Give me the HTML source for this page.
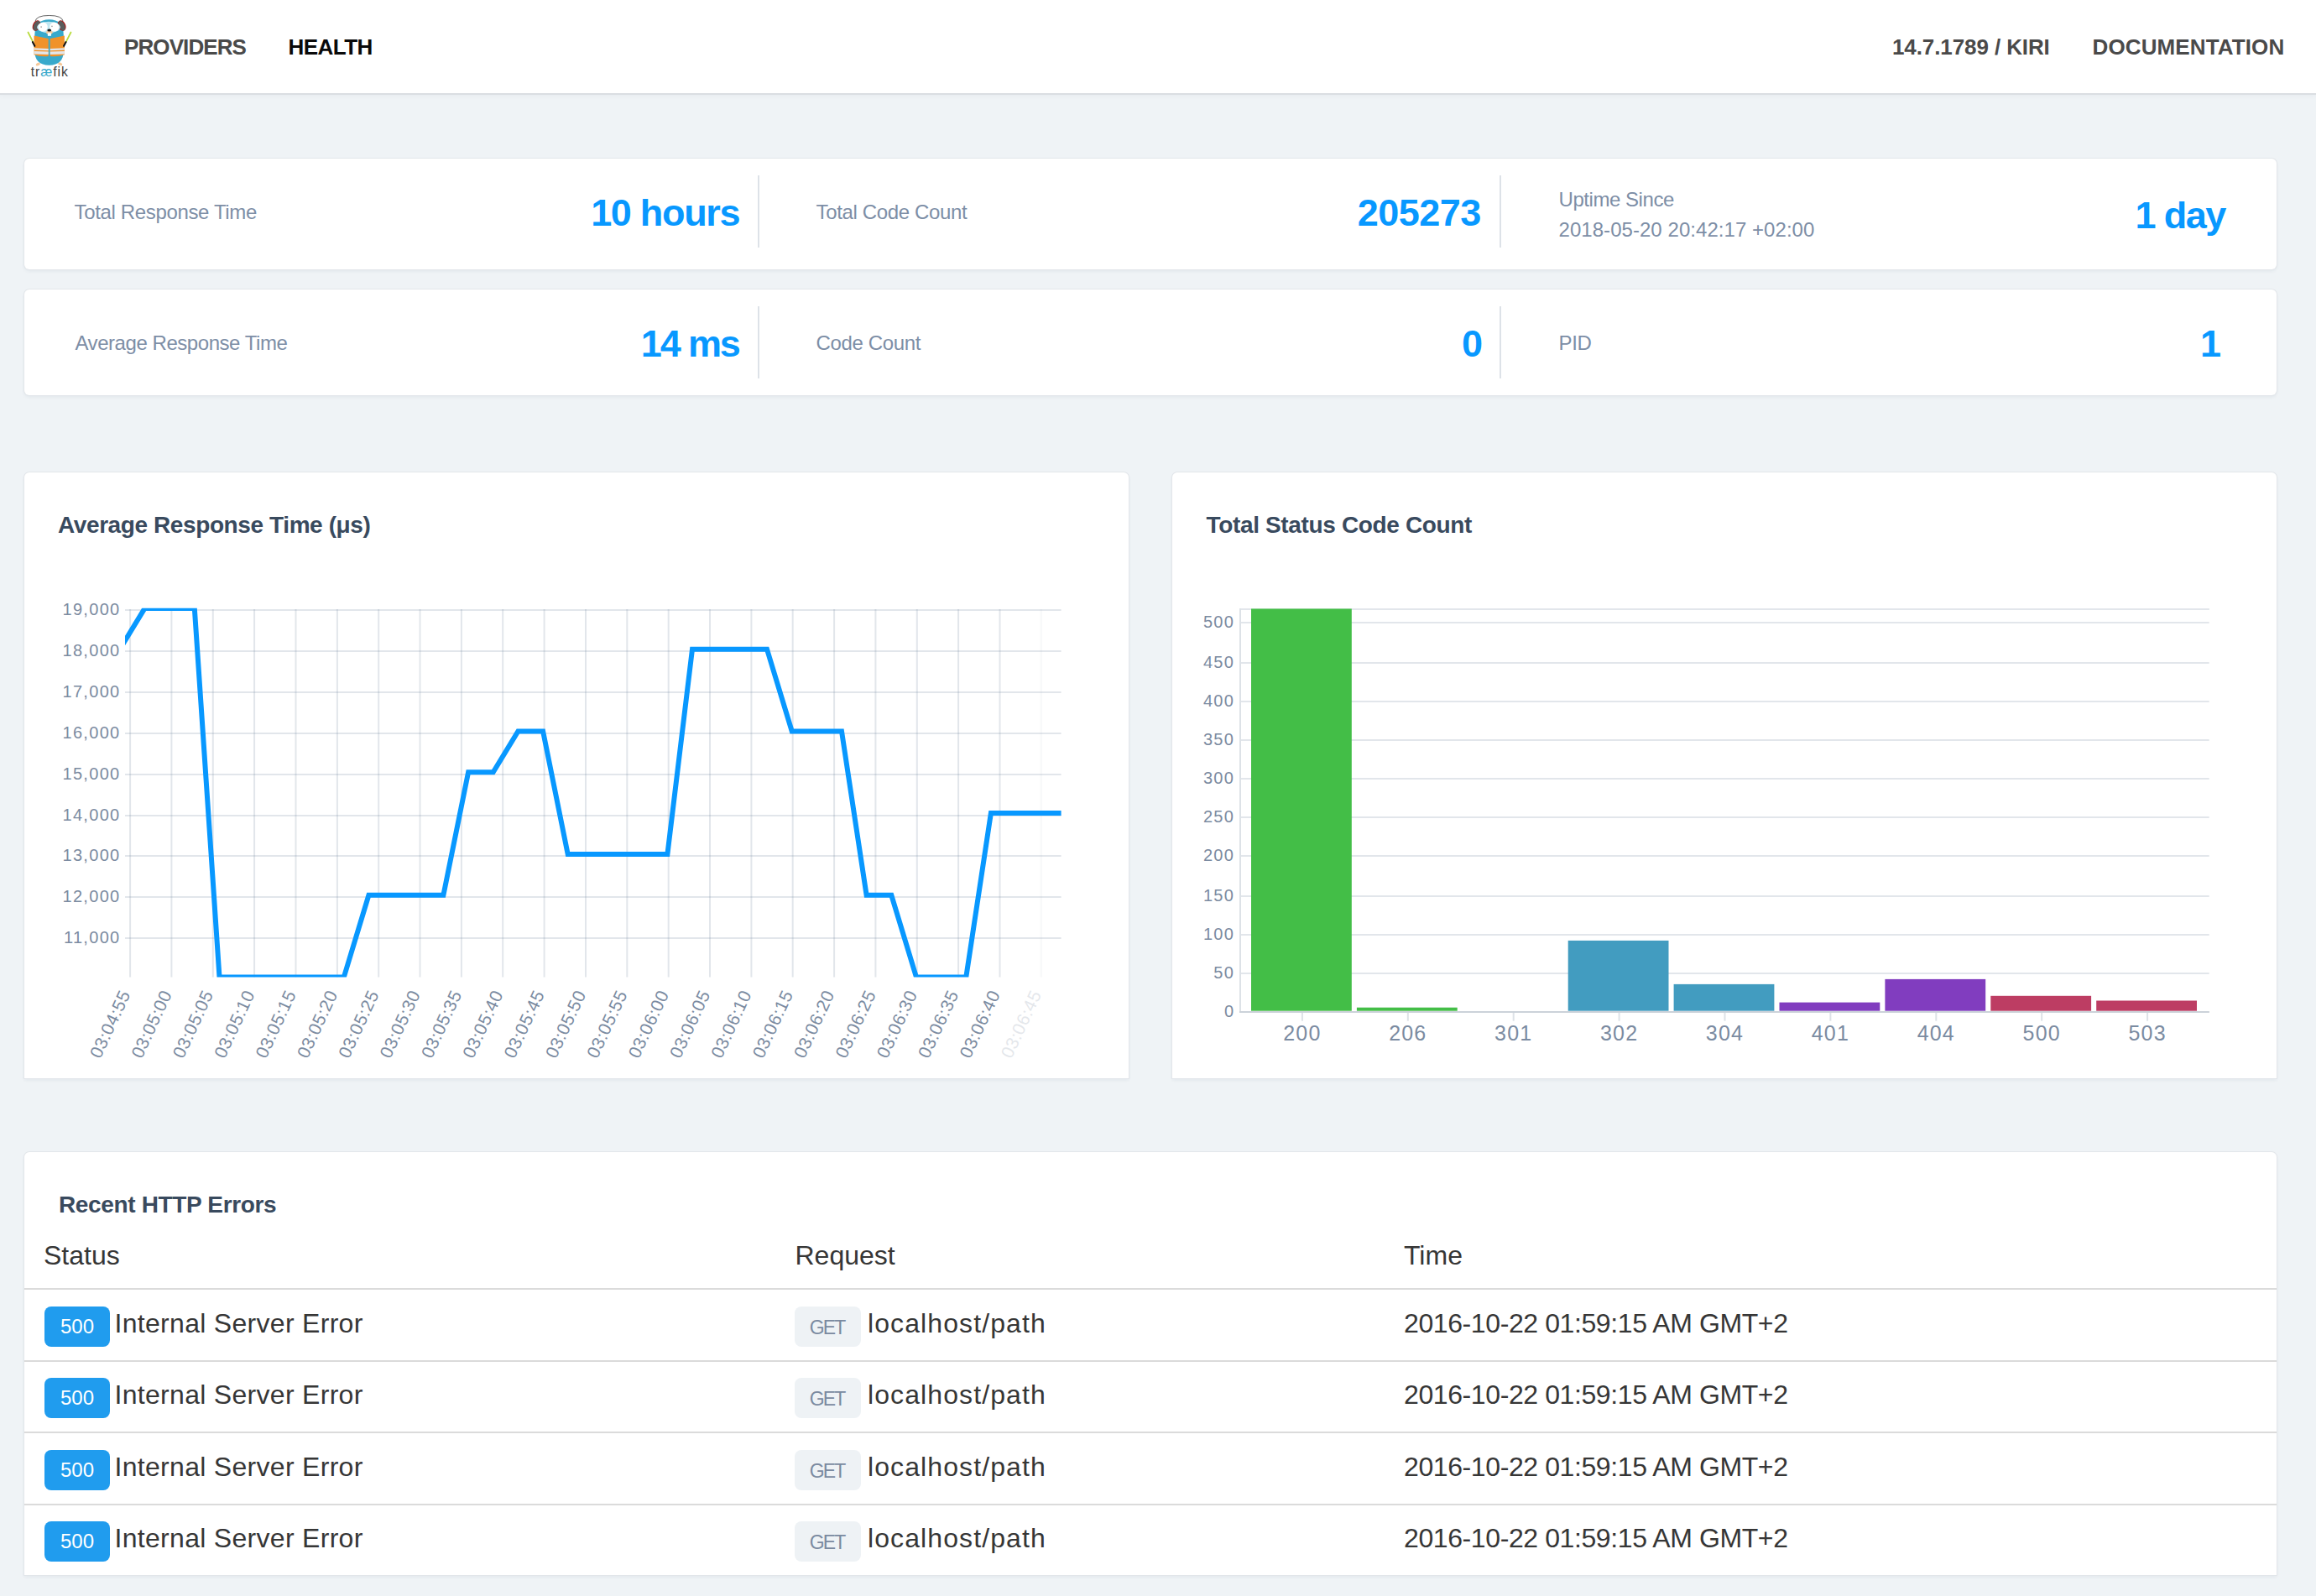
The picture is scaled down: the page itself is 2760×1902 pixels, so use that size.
<!DOCTYPE html>
<html><head><meta charset="utf-8"><title>Traefik Health</title>
<style>
*{margin:0;padding:0;box-sizing:border-box}
html,body{width:2760px;height:1902px;overflow:hidden;background:#eff3f6;font-family:"Liberation Sans",sans-serif;position:relative}
.nav{position:absolute;left:0;top:0;width:2760px;height:111px;background:#fff;box-shadow:0 2px 0 #dadee2,0 3px 6px rgba(20,40,60,.045)}
.card{position:absolute;background:#fff;border-radius:6px;box-shadow:0 0 0 1px #e2e6ea,0 2px 4px rgba(30,50,80,.07)}
.sq{border-radius:6px 6px 0 0}
@media (max-width:2000px){html{zoom:0.5}}
.sep{position:absolute;width:2px;background:#dde2e8}
.hr{position:absolute;left:29px;width:2684px;height:2px;background:#dbdbdb}
.tag500{position:absolute;left:53px;width:78px;height:48px;border-radius:8px;background:#209cee;color:#fff;font-size:24px;line-height:48px;text-align:center;letter-spacing:0px}
.tagget{position:absolute;left:947px;width:79px;height:48px;border-radius:8px;background:#eef2f5;color:#7a8aa0;font-size:23px;line-height:50px;text-align:center;letter-spacing:-1.8px;text-indent:-1.8px}
</style></head>
<body>
<div class="nav"></div>
<div style="position:absolute;top:42.69px;font-size:26px;line-height:26px;color:#4a4a4a;font-weight:700;white-space:nowrap;letter-spacing:-0.9px;left:148.00px;">PROVIDERS</div>
<div style="position:absolute;top:42.69px;font-size:26px;line-height:26px;color:#0a0a0a;font-weight:700;white-space:nowrap;letter-spacing:-0.55px;left:343.50px;">HEALTH</div>
<div style="position:absolute;top:42.69px;font-size:26px;line-height:26px;color:#4a4a4a;font-weight:700;white-space:nowrap;letter-spacing:-0.1px;left:2255.00px;">14.7.1789 / KIRI</div>
<div style="position:absolute;top:42.69px;font-size:26px;line-height:26px;color:#4a4a4a;font-weight:700;white-space:nowrap;letter-spacing:0.12px;left:2493.50px;">DOCUMENTATION</div>
<div class="card" style="left:29px;top:189px;width:2684px;height:132px"></div>
<div class="card" style="left:29px;top:345px;width:2684px;height:126px"></div>
<div class="sep" style="left:903px;top:209px;height:86px"></div>
<div class="sep" style="left:903px;top:365px;height:86px"></div>
<div class="sep" style="left:1787px;top:209px;height:86px"></div>
<div class="sep" style="left:1787px;top:365px;height:86px"></div>
<div style="position:absolute;top:240.68px;font-size:24px;line-height:24px;color:#7d8ea6;font-weight:300;white-space:nowrap;letter-spacing:-0.35px;left:88.50px;">Total Response Time</div>
<div style="position:absolute;top:240.68px;font-size:24px;line-height:24px;color:#7d8ea6;font-weight:300;white-space:nowrap;letter-spacing:-0.35px;left:972.50px;">Total Code Count</div>
<div style="position:absolute;top:225.68px;font-size:24px;line-height:24px;color:#7d8ea6;font-weight:300;white-space:nowrap;letter-spacing:-0.45px;left:1857.50px;">Uptime Since</div>
<div style="position:absolute;top:261.68px;font-size:24px;line-height:24px;color:#7d8ea6;font-weight:300;white-space:nowrap;letter-spacing:0.05px;left:1857.50px;">2018-05-20 20:42:17 +02:00</div>
<div style="position:absolute;top:396.68px;font-size:24px;line-height:24px;color:#7d8ea6;font-weight:300;white-space:nowrap;letter-spacing:-0.45px;left:89.50px;">Average Response Time</div>
<div style="position:absolute;top:396.68px;font-size:24px;line-height:24px;color:#7d8ea6;font-weight:300;white-space:nowrap;letter-spacing:-0.35px;left:972.50px;">Code Count</div>
<div style="position:absolute;top:396.68px;font-size:24px;line-height:24px;color:#7d8ea6;font-weight:300;white-space:nowrap;letter-spacing:-0.35px;left:1857.50px;">PID</div>
<div style="position:absolute;top:230.91px;font-size:45px;line-height:45px;color:#0898ff;font-weight:700;white-space:nowrap;letter-spacing:-1.3px;right:1878.70px;text-align:right;">10 hours</div>
<div style="position:absolute;top:230.91px;font-size:45px;line-height:45px;color:#0898ff;font-weight:700;white-space:nowrap;letter-spacing:-0.5px;right:995.20px;text-align:right;">205273</div>
<div style="position:absolute;top:233.91px;font-size:45px;line-height:45px;color:#0898ff;font-weight:700;white-space:nowrap;letter-spacing:-1.6px;right:108.40px;text-align:right;">1 day</div>
<div style="position:absolute;top:386.61px;font-size:45px;line-height:45px;color:#0898ff;font-weight:700;white-space:nowrap;letter-spacing:-2.1px;right:1879.20px;text-align:right;">14 ms</div>
<div style="position:absolute;top:386.61px;font-size:45px;line-height:45px;color:#0898ff;font-weight:700;white-space:nowrap;right:993.00px;text-align:right;">0</div>
<div style="position:absolute;top:386.61px;font-size:45px;line-height:45px;color:#0898ff;font-weight:700;white-space:nowrap;right:113.00px;text-align:right;">1</div>
<div class="card sq" style="left:29px;top:563px;width:1316px;height:722px"></div>
<div class="card sq" style="left:1397px;top:563px;width:1316px;height:722px"></div>
<div style="position:absolute;top:612.30px;font-size:28px;line-height:28px;color:#394a5e;font-weight:700;white-space:nowrap;letter-spacing:-0.4px;left:69.00px;">Average Response Time (μs)</div>
<div style="position:absolute;top:612.30px;font-size:28px;line-height:28px;color:#394a5e;font-weight:700;white-space:nowrap;letter-spacing:-0.35px;left:1437.50px;">Total Status Code Count</div>
<div class="card sq" style="left:29px;top:1373px;width:2684px;height:504px"></div>
<div style="position:absolute;top:1422.30px;font-size:28px;line-height:28px;color:#394a5e;font-weight:700;white-space:nowrap;letter-spacing:-0.35px;left:70.00px;">Recent HTTP Errors</div>
<div style="position:absolute;top:1479.91px;font-size:32px;line-height:32px;color:#363636;font-weight:400;white-space:nowrap;left:52.00px;">Status</div>
<div style="position:absolute;top:1479.91px;font-size:32px;line-height:32px;color:#363636;font-weight:400;white-space:nowrap;left:947.50px;">Request</div>
<div style="position:absolute;top:1479.91px;font-size:32px;line-height:32px;color:#363636;font-weight:400;white-space:nowrap;left:1673.00px;">Time</div>
<div class="hr" style="top:1535px"></div>
<div class="tag500" style="top:1557.3px">500</div>
<div style="position:absolute;top:1561.21px;font-size:32px;line-height:32px;color:#363636;font-weight:400;white-space:nowrap;letter-spacing:0.3px;left:136.50px;">Internal Server Error</div>
<div class="tagget" style="top:1557.3px">GET</div>
<div style="position:absolute;top:1561.21px;font-size:32px;line-height:32px;color:#363636;font-weight:400;white-space:nowrap;letter-spacing:1.1px;left:1034.00px;">localhost/path</div>
<div style="position:absolute;top:1561.21px;font-size:32px;line-height:32px;color:#363636;font-weight:400;white-space:nowrap;letter-spacing:-0.4px;left:1673.00px;">2016-10-22 01:59:15 AM GMT+2</div>
<div class="hr" style="top:1620.5px"></div>
<div class="tag500" style="top:1642.0px">500</div>
<div style="position:absolute;top:1645.88px;font-size:32px;line-height:32px;color:#363636;font-weight:400;white-space:nowrap;letter-spacing:0.3px;left:136.50px;">Internal Server Error</div>
<div class="tagget" style="top:1642.0px">GET</div>
<div style="position:absolute;top:1645.88px;font-size:32px;line-height:32px;color:#363636;font-weight:400;white-space:nowrap;letter-spacing:1.1px;left:1034.00px;">localhost/path</div>
<div style="position:absolute;top:1645.88px;font-size:32px;line-height:32px;color:#363636;font-weight:400;white-space:nowrap;letter-spacing:-0.4px;left:1673.00px;">2016-10-22 01:59:15 AM GMT+2</div>
<div class="hr" style="top:1706.1px"></div>
<div class="tag500" style="top:1727.6px">500</div>
<div style="position:absolute;top:1731.55px;font-size:32px;line-height:32px;color:#363636;font-weight:400;white-space:nowrap;letter-spacing:0.3px;left:136.50px;">Internal Server Error</div>
<div class="tagget" style="top:1727.6px">GET</div>
<div style="position:absolute;top:1731.55px;font-size:32px;line-height:32px;color:#363636;font-weight:400;white-space:nowrap;letter-spacing:1.1px;left:1034.00px;">localhost/path</div>
<div style="position:absolute;top:1731.55px;font-size:32px;line-height:32px;color:#363636;font-weight:400;white-space:nowrap;letter-spacing:-0.4px;left:1673.00px;">2016-10-22 01:59:15 AM GMT+2</div>
<div class="hr" style="top:1791.8px"></div>
<div class="tag500" style="top:1813.3px">500</div>
<div style="position:absolute;top:1817.22px;font-size:32px;line-height:32px;color:#363636;font-weight:400;white-space:nowrap;letter-spacing:0.3px;left:136.50px;">Internal Server Error</div>
<div class="tagget" style="top:1813.3px">GET</div>
<div style="position:absolute;top:1817.22px;font-size:32px;line-height:32px;color:#363636;font-weight:400;white-space:nowrap;letter-spacing:1.1px;left:1034.00px;">localhost/path</div>
<div style="position:absolute;top:1817.22px;font-size:32px;line-height:32px;color:#363636;font-weight:400;white-space:nowrap;letter-spacing:-0.4px;left:1673.00px;">2016-10-22 01:59:15 AM GMT+2</div>

<svg style="position:absolute;left:0;top:0" width="2760" height="1902" font-family="Liberation Sans, sans-serif">
<line x1="149" y1="727.0" x2="1264.6" y2="727.0" stroke="rgba(110,128,155,0.2)" stroke-width="2"/>
<text x="143.5" y="733.0" text-anchor="end" font-size="20" letter-spacing="1.3" fill="#7b8ba1">19,000</text>
<line x1="149" y1="776.0" x2="1264.6" y2="776.0" stroke="rgba(110,128,155,0.2)" stroke-width="2"/>
<text x="143.5" y="782.0" text-anchor="end" font-size="20" letter-spacing="1.3" fill="#7b8ba1">18,000</text>
<line x1="149" y1="825.0" x2="1264.6" y2="825.0" stroke="rgba(110,128,155,0.2)" stroke-width="2"/>
<text x="143.5" y="831.0" text-anchor="end" font-size="20" letter-spacing="1.3" fill="#7b8ba1">17,000</text>
<line x1="149" y1="874.0" x2="1264.6" y2="874.0" stroke="rgba(110,128,155,0.2)" stroke-width="2"/>
<text x="143.5" y="880.0" text-anchor="end" font-size="20" letter-spacing="1.3" fill="#7b8ba1">16,000</text>
<line x1="149" y1="923.0" x2="1264.6" y2="923.0" stroke="rgba(110,128,155,0.2)" stroke-width="2"/>
<text x="143.5" y="929.0" text-anchor="end" font-size="20" letter-spacing="1.3" fill="#7b8ba1">15,000</text>
<line x1="149" y1="972.0" x2="1264.6" y2="972.0" stroke="rgba(110,128,155,0.2)" stroke-width="2"/>
<text x="143.5" y="978.0" text-anchor="end" font-size="20" letter-spacing="1.3" fill="#7b8ba1">14,000</text>
<line x1="149" y1="1020.0" x2="1264.6" y2="1020.0" stroke="rgba(110,128,155,0.2)" stroke-width="2"/>
<text x="143.5" y="1026.0" text-anchor="end" font-size="20" letter-spacing="1.3" fill="#7b8ba1">13,000</text>
<line x1="149" y1="1069.0" x2="1264.6" y2="1069.0" stroke="rgba(110,128,155,0.2)" stroke-width="2"/>
<text x="143.5" y="1075.0" text-anchor="end" font-size="20" letter-spacing="1.3" fill="#7b8ba1">12,000</text>
<line x1="149" y1="1118.0" x2="1264.6" y2="1118.0" stroke="rgba(110,128,155,0.2)" stroke-width="2"/>
<text x="143.5" y="1124.0" text-anchor="end" font-size="20" letter-spacing="1.3" fill="#7b8ba1">11,000</text>
<line x1="155.1" y1="726" x2="155.1" y2="1164.6" stroke="rgba(110,128,155,0.2)" stroke-width="2" opacity="1"/>
<text transform="translate(156.0,1184.5) rotate(-65)" text-anchor="end" font-size="21" letter-spacing="0.55" fill="#7b8ba1" opacity="1">03:04:55</text>
<line x1="204.4" y1="726" x2="204.4" y2="1164.6" stroke="rgba(110,128,155,0.2)" stroke-width="2" opacity="1"/>
<text transform="translate(205.3,1184.5) rotate(-65)" text-anchor="end" font-size="21" letter-spacing="0.55" fill="#7b8ba1" opacity="1">03:05:00</text>
<line x1="253.8" y1="726" x2="253.8" y2="1164.6" stroke="rgba(110,128,155,0.2)" stroke-width="2" opacity="1"/>
<text transform="translate(254.7,1184.5) rotate(-65)" text-anchor="end" font-size="21" letter-spacing="0.55" fill="#7b8ba1" opacity="1">03:05:05</text>
<line x1="303.1" y1="726" x2="303.1" y2="1164.6" stroke="rgba(110,128,155,0.2)" stroke-width="2" opacity="1"/>
<text transform="translate(304.1,1184.5) rotate(-65)" text-anchor="end" font-size="21" letter-spacing="0.55" fill="#7b8ba1" opacity="1">03:05:10</text>
<line x1="352.5" y1="726" x2="352.5" y2="1164.6" stroke="rgba(110,128,155,0.2)" stroke-width="2" opacity="1"/>
<text transform="translate(353.4,1184.5) rotate(-65)" text-anchor="end" font-size="21" letter-spacing="0.55" fill="#7b8ba1" opacity="1">03:05:15</text>
<line x1="401.9" y1="726" x2="401.9" y2="1164.6" stroke="rgba(110,128,155,0.2)" stroke-width="2" opacity="1"/>
<text transform="translate(402.8,1184.5) rotate(-65)" text-anchor="end" font-size="21" letter-spacing="0.55" fill="#7b8ba1" opacity="1">03:05:20</text>
<line x1="451.2" y1="726" x2="451.2" y2="1164.6" stroke="rgba(110,128,155,0.2)" stroke-width="2" opacity="1"/>
<text transform="translate(452.1,1184.5) rotate(-65)" text-anchor="end" font-size="21" letter-spacing="0.55" fill="#7b8ba1" opacity="1">03:05:25</text>
<line x1="500.5" y1="726" x2="500.5" y2="1164.6" stroke="rgba(110,128,155,0.2)" stroke-width="2" opacity="1"/>
<text transform="translate(501.4,1184.5) rotate(-65)" text-anchor="end" font-size="21" letter-spacing="0.55" fill="#7b8ba1" opacity="1">03:05:30</text>
<line x1="549.9" y1="726" x2="549.9" y2="1164.6" stroke="rgba(110,128,155,0.2)" stroke-width="2" opacity="1"/>
<text transform="translate(550.8,1184.5) rotate(-65)" text-anchor="end" font-size="21" letter-spacing="0.55" fill="#7b8ba1" opacity="1">03:05:35</text>
<line x1="599.2" y1="726" x2="599.2" y2="1164.6" stroke="rgba(110,128,155,0.2)" stroke-width="2" opacity="1"/>
<text transform="translate(600.2,1184.5) rotate(-65)" text-anchor="end" font-size="21" letter-spacing="0.55" fill="#7b8ba1" opacity="1">03:05:40</text>
<line x1="648.6" y1="726" x2="648.6" y2="1164.6" stroke="rgba(110,128,155,0.2)" stroke-width="2" opacity="1"/>
<text transform="translate(649.5,1184.5) rotate(-65)" text-anchor="end" font-size="21" letter-spacing="0.55" fill="#7b8ba1" opacity="1">03:05:45</text>
<line x1="698.0" y1="726" x2="698.0" y2="1164.6" stroke="rgba(110,128,155,0.2)" stroke-width="2" opacity="1"/>
<text transform="translate(698.9,1184.5) rotate(-65)" text-anchor="end" font-size="21" letter-spacing="0.55" fill="#7b8ba1" opacity="1">03:05:50</text>
<line x1="747.3" y1="726" x2="747.3" y2="1164.6" stroke="rgba(110,128,155,0.2)" stroke-width="2" opacity="1"/>
<text transform="translate(748.2,1184.5) rotate(-65)" text-anchor="end" font-size="21" letter-spacing="0.55" fill="#7b8ba1" opacity="1">03:05:55</text>
<line x1="796.7" y1="726" x2="796.7" y2="1164.6" stroke="rgba(110,128,155,0.2)" stroke-width="2" opacity="1"/>
<text transform="translate(797.6,1184.5) rotate(-65)" text-anchor="end" font-size="21" letter-spacing="0.55" fill="#7b8ba1" opacity="1">03:06:00</text>
<line x1="846.0" y1="726" x2="846.0" y2="1164.6" stroke="rgba(110,128,155,0.2)" stroke-width="2" opacity="1"/>
<text transform="translate(846.9,1184.5) rotate(-65)" text-anchor="end" font-size="21" letter-spacing="0.55" fill="#7b8ba1" opacity="1">03:06:05</text>
<line x1="895.4" y1="726" x2="895.4" y2="1164.6" stroke="rgba(110,128,155,0.2)" stroke-width="2" opacity="1"/>
<text transform="translate(896.2,1184.5) rotate(-65)" text-anchor="end" font-size="21" letter-spacing="0.55" fill="#7b8ba1" opacity="1">03:06:10</text>
<line x1="944.7" y1="726" x2="944.7" y2="1164.6" stroke="rgba(110,128,155,0.2)" stroke-width="2" opacity="1"/>
<text transform="translate(945.6,1184.5) rotate(-65)" text-anchor="end" font-size="21" letter-spacing="0.55" fill="#7b8ba1" opacity="1">03:06:15</text>
<line x1="994.1" y1="726" x2="994.1" y2="1164.6" stroke="rgba(110,128,155,0.2)" stroke-width="2" opacity="1"/>
<text transform="translate(995.0,1184.5) rotate(-65)" text-anchor="end" font-size="21" letter-spacing="0.55" fill="#7b8ba1" opacity="1">03:06:20</text>
<line x1="1043.4" y1="726" x2="1043.4" y2="1164.6" stroke="rgba(110,128,155,0.2)" stroke-width="2" opacity="1"/>
<text transform="translate(1044.3,1184.5) rotate(-65)" text-anchor="end" font-size="21" letter-spacing="0.55" fill="#7b8ba1" opacity="1">03:06:25</text>
<line x1="1092.8" y1="726" x2="1092.8" y2="1164.6" stroke="rgba(110,128,155,0.2)" stroke-width="2" opacity="1"/>
<text transform="translate(1093.7,1184.5) rotate(-65)" text-anchor="end" font-size="21" letter-spacing="0.55" fill="#7b8ba1" opacity="1">03:06:30</text>
<line x1="1142.1" y1="726" x2="1142.1" y2="1164.6" stroke="rgba(110,128,155,0.2)" stroke-width="2" opacity="1"/>
<text transform="translate(1143.0,1184.5) rotate(-65)" text-anchor="end" font-size="21" letter-spacing="0.55" fill="#7b8ba1" opacity="1">03:06:35</text>
<line x1="1191.5" y1="726" x2="1191.5" y2="1164.6" stroke="rgba(110,128,155,0.2)" stroke-width="2" opacity="1"/>
<text transform="translate(1192.4,1184.5) rotate(-65)" text-anchor="end" font-size="21" letter-spacing="0.55" fill="#7b8ba1" opacity="1">03:06:40</text>
<line x1="1240.8" y1="726" x2="1240.8" y2="1164.6" stroke="rgba(110,128,155,0.2)" stroke-width="2" opacity="0.25"/>
<text transform="translate(1241.7,1184.5) rotate(-65)" text-anchor="end" font-size="21" letter-spacing="0.55" fill="#7b8ba1" opacity="0.2">03:06:45</text>
<clipPath id="lc"><rect x="149" y="724.85" width="1115.6" height="439.65"/></clipPath>
<polyline clip-path="url(#lc)" points="142.8,773.7 172.5,724.9 202.2,724.9 231.8,724.9 261.5,1164.5 291.1,1164.5 320.8,1164.5 350.5,1164.5 380.1,1164.5 409.8,1164.5 439.4,1066.8 469.1,1066.8 498.8,1066.8 528.4,1066.8 558.1,920.2 587.7,920.2 617.4,871.4 647.1,871.4 676.7,1018.0 706.4,1018.0 736.0,1018.0 765.7,1018.0 795.4,1018.0 825.0,773.7 854.7,773.7 884.3,773.7 914.0,773.7 943.7,871.4 973.3,871.4 1003.0,871.4 1032.6,1066.8 1062.3,1066.8 1092.0,1164.5 1121.6,1164.5 1151.3,1164.5 1180.9,969.1 1210.6,969.1 1240.3,969.1 1269.9,969.1" fill="none" stroke="#0898ff" stroke-width="6" stroke-linejoin="miter"/>
<line x1="1478" y1="1160.0" x2="2632.7" y2="1160.0" stroke="rgba(110,128,155,0.2)" stroke-width="2"/>
<text x="1471" y="1166.0" text-anchor="end" font-size="20" letter-spacing="1.2" fill="#7b8ba1">50</text>
<line x1="1478" y1="1114.0" x2="2632.7" y2="1114.0" stroke="rgba(110,128,155,0.2)" stroke-width="2"/>
<text x="1471" y="1120.0" text-anchor="end" font-size="20" letter-spacing="1.2" fill="#7b8ba1">100</text>
<line x1="1478" y1="1068.0" x2="2632.7" y2="1068.0" stroke="rgba(110,128,155,0.2)" stroke-width="2"/>
<text x="1471" y="1074.0" text-anchor="end" font-size="20" letter-spacing="1.2" fill="#7b8ba1">150</text>
<line x1="1478" y1="1020.0" x2="2632.7" y2="1020.0" stroke="rgba(110,128,155,0.2)" stroke-width="2"/>
<text x="1471" y="1026.0" text-anchor="end" font-size="20" letter-spacing="1.2" fill="#7b8ba1">200</text>
<line x1="1478" y1="974.0" x2="2632.7" y2="974.0" stroke="rgba(110,128,155,0.2)" stroke-width="2"/>
<text x="1471" y="980.0" text-anchor="end" font-size="20" letter-spacing="1.2" fill="#7b8ba1">250</text>
<line x1="1478" y1="928.0" x2="2632.7" y2="928.0" stroke="rgba(110,128,155,0.2)" stroke-width="2"/>
<text x="1471" y="934.0" text-anchor="end" font-size="20" letter-spacing="1.2" fill="#7b8ba1">300</text>
<line x1="1478" y1="882.0" x2="2632.7" y2="882.0" stroke="rgba(110,128,155,0.2)" stroke-width="2"/>
<text x="1471" y="888.0" text-anchor="end" font-size="20" letter-spacing="1.2" fill="#7b8ba1">350</text>
<line x1="1478" y1="836.0" x2="2632.7" y2="836.0" stroke="rgba(110,128,155,0.2)" stroke-width="2"/>
<text x="1471" y="842.0" text-anchor="end" font-size="20" letter-spacing="1.2" fill="#7b8ba1">400</text>
<line x1="1478" y1="790.0" x2="2632.7" y2="790.0" stroke="rgba(110,128,155,0.2)" stroke-width="2"/>
<text x="1471" y="796.0" text-anchor="end" font-size="20" letter-spacing="1.2" fill="#7b8ba1">450</text>
<line x1="1478" y1="742.0" x2="2632.7" y2="742.0" stroke="rgba(110,128,155,0.2)" stroke-width="2"/>
<text x="1471" y="748.0" text-anchor="end" font-size="20" letter-spacing="1.2" fill="#7b8ba1">500</text>
<text x="1470" y="1212.0" text-anchor="end" font-size="20" fill="#7b8ba1">0</text>
<line x1="1477" y1="726" x2="2632.9" y2="726" stroke="rgba(110,128,155,0.2)" stroke-width="2"/>
<line x1="1478" y1="725" x2="1478" y2="1206" stroke="#dde2e7" stroke-width="2"/>
<rect x="1491.0" y="725.5" width="119.8" height="479.2" fill="#43be47"/>
<line x1="1551.9" y1="1205" x2="1551.9" y2="1216.7" stroke="#dde2e7" stroke-width="2"/>
<text x="1551.9" y="1239.8" text-anchor="middle" font-size="25" letter-spacing="1.2" fill="#7b8ba1">200</text>
<rect x="1616.9" y="1200.7" width="119.8" height="4.0" fill="#43be47"/>
<line x1="1677.8" y1="1205" x2="1677.8" y2="1216.7" stroke="#dde2e7" stroke-width="2"/>
<text x="1677.8" y="1239.8" text-anchor="middle" font-size="25" letter-spacing="1.2" fill="#7b8ba1">206</text>
<line x1="1803.7" y1="1205" x2="1803.7" y2="1216.7" stroke="#dde2e7" stroke-width="2"/>
<text x="1803.7" y="1239.8" text-anchor="middle" font-size="25" letter-spacing="1.2" fill="#7b8ba1">301</text>
<rect x="1868.7" y="1120.9" width="119.8" height="83.8" fill="#429cc0"/>
<line x1="1929.6" y1="1205" x2="1929.6" y2="1216.7" stroke="#dde2e7" stroke-width="2"/>
<text x="1929.6" y="1239.8" text-anchor="middle" font-size="25" letter-spacing="1.2" fill="#7b8ba1">302</text>
<rect x="1994.6" y="1172.9" width="119.8" height="31.8" fill="#429cc0"/>
<line x1="2055.5" y1="1205" x2="2055.5" y2="1216.7" stroke="#dde2e7" stroke-width="2"/>
<text x="2055.5" y="1239.8" text-anchor="middle" font-size="25" letter-spacing="1.2" fill="#7b8ba1">304</text>
<rect x="2120.5" y="1194.6" width="119.8" height="10.1" fill="#813dbf"/>
<line x1="2181.4" y1="1205" x2="2181.4" y2="1216.7" stroke="#dde2e7" stroke-width="2"/>
<text x="2181.4" y="1239.8" text-anchor="middle" font-size="25" letter-spacing="1.2" fill="#7b8ba1">401</text>
<rect x="2246.4" y="1166.9" width="119.8" height="37.8" fill="#813dbf"/>
<line x1="2307.3" y1="1205" x2="2307.3" y2="1216.7" stroke="#dde2e7" stroke-width="2"/>
<text x="2307.3" y="1239.8" text-anchor="middle" font-size="25" letter-spacing="1.2" fill="#7b8ba1">404</text>
<rect x="2372.3" y="1186.8" width="119.8" height="17.9" fill="#bd3d63"/>
<line x1="2433.2" y1="1205" x2="2433.2" y2="1216.7" stroke="#dde2e7" stroke-width="2"/>
<text x="2433.2" y="1239.8" text-anchor="middle" font-size="25" letter-spacing="1.2" fill="#7b8ba1">500</text>
<rect x="2498.2" y="1192.5" width="119.8" height="12.2" fill="#bd3d63"/>
<line x1="2559.1" y1="1205" x2="2559.1" y2="1216.7" stroke="#dde2e7" stroke-width="2"/>
<text x="2559.1" y="1239.8" text-anchor="middle" font-size="25" letter-spacing="1.2" fill="#7b8ba1">503</text>
<line x1="1477" y1="1206" x2="2632.9" y2="1206" stroke="#ccd2d9" stroke-width="2"/>
</svg>

<svg style="position:absolute;left:25px;top:10px" width="70" height="90" viewBox="0 0 1241 1596">
<ellipse cx="360" cy="1180" rx="48" ry="30" fill="#f5c99b" transform="rotate(-25 360 1180)"/>
<ellipse cx="828" cy="1175" rx="48" ry="30" fill="#f5c99b" transform="rotate(25 828 1175)"/>
<path d="M290 560 Q290 235 595 235 Q900 235 900 560 L900 900 Q900 1200 595 1200 Q290 1200 290 900 Z" fill="#38a9cb"/>
<path d="M300 275 Q320 150 595 150 Q870 150 890 275" fill="none" stroke="#3a3a3a" stroke-width="14"/>
<ellipse cx="330" cy="365" rx="82" ry="115" fill="#b30d0d" transform="rotate(25 330 365)"/>
<ellipse cx="330" cy="365" rx="62" ry="112" fill="#5b5b5b" transform="rotate(25 330 365)"/>
<ellipse cx="862" cy="365" rx="82" ry="115" fill="#b30d0d" transform="rotate(-25 862 365)"/>
<ellipse cx="862" cy="365" rx="62" ry="112" fill="#5b5b5b" transform="rotate(-25 862 365)"/>
<ellipse cx="585" cy="400" rx="245" ry="120" fill="#bfe6f1"/>
<circle cx="465" cy="390" r="98" fill="#fff"/>
<circle cx="705" cy="390" r="98" fill="#fff"/>
<circle cx="428" cy="392" r="16" fill="#aaa"/>
<circle cx="655" cy="378" r="16" fill="#aaa"/>
<ellipse cx="600" cy="510" rx="68" ry="38" fill="#f5c99b"/>
<ellipse cx="598" cy="462" rx="42" ry="27" fill="#111"/>
<rect x="565" y="520" width="72" height="62" fill="#fff"/>
<path d="M275 575 L580 640 L580 1010 Q430 1030 275 980 Z" fill="#f0922a"/>
<path d="M920 575 L615 640 L615 1010 Q765 1030 920 980 Z" fill="#f0922a"/>
<path d="M275 840 L580 850 L580 890 L275 880 Z M275 905 L580 915 L580 975 L275 965 Z" fill="#e3e6ea"/>
<path d="M920 840 L615 850 L615 890 L920 880 Z M920 905 L615 915 L615 975 L920 965 Z" fill="#e3e6ea"/>
<path d="M150 505 L255 710" stroke="#b9dc3e" stroke-width="32" stroke-linecap="round"/>
<path d="M1055 505 L950 710" stroke="#b9dc3e" stroke-width="32" stroke-linecap="round"/>
<path d="M245 710 L290 795" stroke="#111" stroke-width="36" stroke-linecap="round"/>
<path d="M950 710 L905 795" stroke="#111" stroke-width="36" stroke-linecap="round"/>
<text x="210" y="1440" font-family="Liberation Sans" font-size="280" fill="#444" letter-spacing="16">tr<tspan fill="#38a9cb">æ</tspan>fik</text>
</svg>
</body></html>
